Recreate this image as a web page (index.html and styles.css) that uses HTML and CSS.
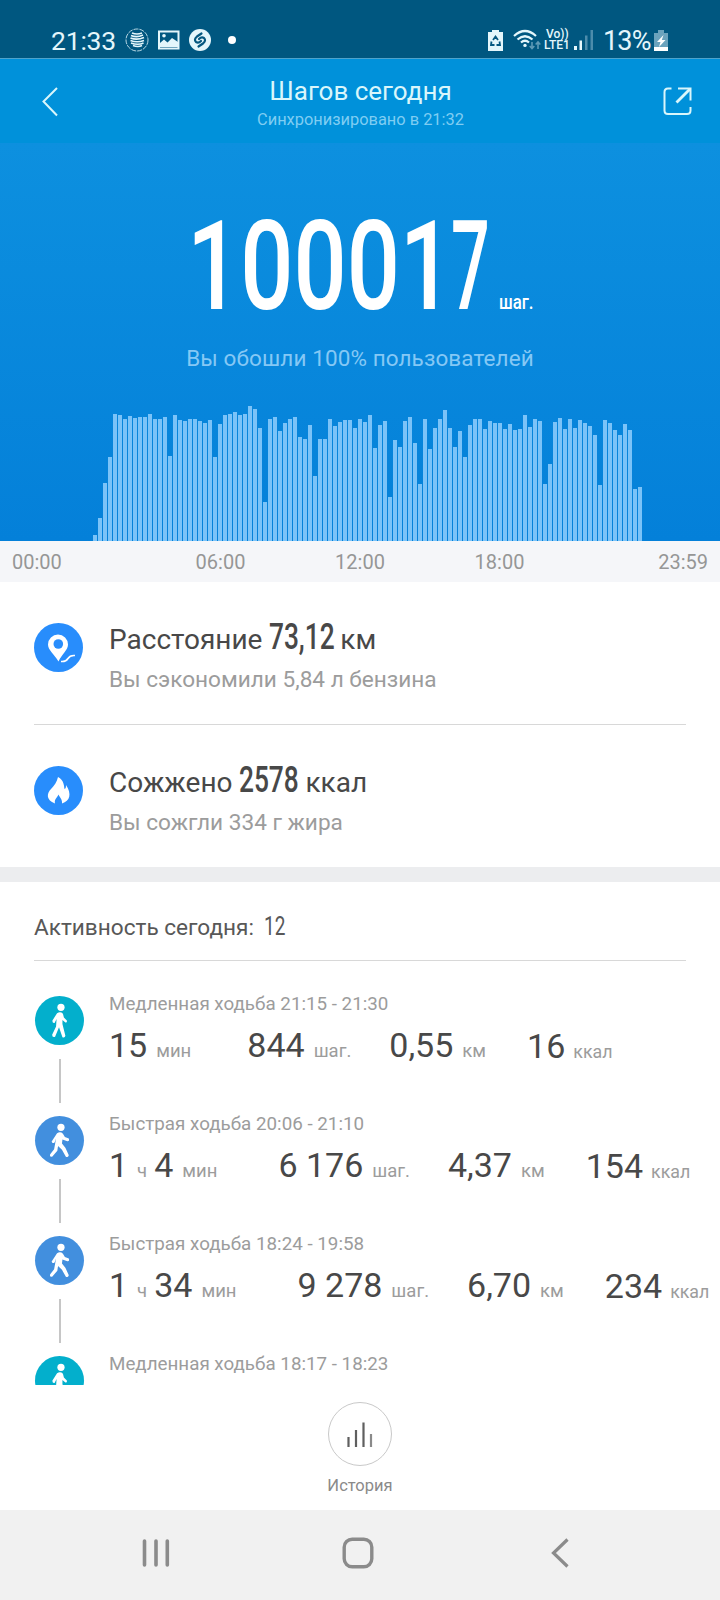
FILE: index.html
```html
<!DOCTYPE html>
<html lang="ru">
<head>
    <meta charset="UTF-8">
    <meta name="viewport" content="width=device-width, initial-scale=1.0">
    <title>Шагов сегодня</title>
    <link rel="stylesheet" href="styles.css">
</head>
<body>
    <!-- Shared icons -->
    <svg class="defs" width="0" height="0">
        <symbol id="walk-slow" viewBox="0 0 50 50">
            <circle cx="26.5" cy="11.5" r="3.7" fill="#fff"/>
            <path d="M22.5 17.5 Q26 15.5 28.5 18 L29.5 22 L32.5 25 Q33 27.5 31 27 L28 24.5 L28 28.5 L31 40.5 Q30.5 43 28 42 L24.5 32 L20.5 41.5 Q17.5 42.5 17.5 39.5 L21.5 31 L22 23.5 L20 27.5 Q17.5 28 17.8 25 Z" fill="#fff"/>
        </symbol>
        <symbol id="walk-fast" viewBox="0 0 50 50">
            <circle cx="26.5" cy="11.5" r="3.7" fill="#fff"/>
            <path d="M22.5 17.5 Q26 15.5 28.5 18 L30.5 21.5 L34.5 23 Q35.5 26 33 25.8 L28 24 L27.5 28 L31 32.5 L34.5 40 Q33.5 42.8 31.5 41.5 L27.5 34.5 L23.5 30.5 L22.8 35.5 L17.5 41.5 Q14.5 42 15.5 39 L19.5 34 L21.5 23 L20 27 Q17.5 28.5 17 26 Z" fill="#fff"/>
        </symbol>
    </svg>

    <div class="status-bar">
        <span class="clock">21:33</span>
        <svg class="icon-globe" width="24" height="24" viewBox="0 0 24 24" fill="none" stroke="#e4f6fb">
            <circle cx="12" cy="12" r="11" stroke-width="0.8" stroke-dasharray="5 1"/>
            <path d="M7 5 Q12 7 17 5 M6 7.5 Q12 10 18 7 M5.5 10 Q12 12.5 19 9.5 M5.5 12.5 Q12 15 19 12.5 M6 15 Q13 17.5 18.5 15 M8 17.5 Q13 19.5 17 17.5" stroke-width="1.6"/>
        </svg>
        <svg class="icon-picture" width="22" height="20" viewBox="0 0 22 20">
            <path d="M1 1.5H20.5V18.5H1Z" fill="none" stroke="#e4f6fb" stroke-width="2"/>
            <path d="M2 17V13L6 9.5L9.5 12.5L14 8L20 12V17Z" fill="#e4f6fb"/>
            <circle cx="6" cy="5.8" r="1.8" fill="#e4f6fb"/>
        </svg>
        <svg class="icon-shazam" width="22" height="22" viewBox="0 0 22 22">
            <circle cx="11" cy="11" r="11" fill="#e4f6fb"/>
            <path d="M12.5 4.5L8 7.5Q4.5 10.5 7 13Q9.5 14.5 12 12 M9.5 17.5L14 14.5Q17.5 11.5 15 9Q12.5 7.5 10 10" fill="none" stroke="#05577f" stroke-width="2.2" stroke-linecap="round"/>
        </svg>
        <span class="status-dot"></span>

        <div class="status-right">
            <svg class="icon-saver" width="15" height="21" viewBox="0 0 15 21">
                <path d="M4 0H11V2H15V21H0V2H4Z" fill="#e4f6fb"/>
                <path d="M5 10L7.5 6.5L10 10 M11.5 11.5L12 15H8.5 M3.5 11.5L3 15H6.5" fill="none" stroke="#05577f" stroke-width="1.8"/>
            </svg>
            <svg class="icon-wifi" width="29" height="22" viewBox="0 0 29 22" fill="none" stroke="#e4f6fb" stroke-width="2.2">
                <path d="M1 7Q12 -3 23 7 M4.5 10.5Q12 4 19.5 10.5 M8 13.5Q12 10 16 13.5"/>
                <circle cx="12" cy="16.4" r="1.7" fill="#e4f6fb" stroke="none"/>
                <path d="M19 13V19 M16.7 17L19 19.5L21.3 17 M25 20V14 M22.7 15.5L25 13L27.3 15.5" stroke="#5e9ab6" stroke-width="1.6"/>
            </svg>
            <div class="volte"><span>Vo))</span><span>LTE1</span></div>
            <svg class="icon-signal" width="20" height="20" viewBox="0 0 20 20">
                <path d="M0 16H3V20H0Z M5.5 10.5H8V20H5.5Z" fill="#e4f6fb"/>
                <path d="M11 5.5H13.5V20H11Z M16.5 0H19V20H16.5Z" fill="#4c8cab"/>
            </svg>
            <span class="battery-text">13%</span>
            <svg class="icon-battery" width="15" height="21" viewBox="0 0 15 21">
                <path d="M4 0H10V3H14V17H0V3H4Z" fill="#6ba3bd"/>
                <path d="M0 17H14V21H0Z M9.5 5L3 12H6.5L5 17L11.5 10H7.8Z" fill="#fff"/>
            </svg>
        </div>
    </div>

    <header class="header">
        <svg class="back" width="16" height="30" viewBox="0 0 16 30" fill="none" stroke="#d9f6fb" stroke-width="2">
            <path d="M15 1L1.5 14.5L15 28.5"/>
        </svg>
        <div class="header-title">
            <h1>Шагов сегодня</h1>
            <p>Синхронизировано в 21:32</p>
        </div>
        <svg class="share" width="29" height="29" viewBox="0 0 29 29" fill="none" stroke="#d9f6fb" stroke-width="2">
            <path d="M8.5 1.5H5Q1.5 1.5 1.5 5V23.5Q1.5 27 5 27H24Q27.5 27 27.5 23.5V20 M15 1.5H27.5V13.5"/>
            <path d="M27 2L13.5 15.5" stroke-width="2.8"/>
        </svg>
    </header>

    <section class="hero">
        <div class="steps">
            <span class="steps-value"><span class="narrow">10001</span><span class="narrow seven">7</span></span>
            <span class="steps-unit"><span class="narrow">шаг.</span></span>
        </div>
        <p class="rank">Вы обошли 100% пользователей</p>
        <div class="chart" id="chart"></div>
    </section>
    <div class="axis">
        <span>00:00</span>
        <span>06:00</span>
        <span>12:00</span>
        <span>18:00</span>
        <span>23:59</span>
    </div>

    <section class="summary">
        <div class="summary-row">
            <svg class="summary-icon" width="49" height="49" viewBox="0 0 49 49">
                <circle cx="24.5" cy="24.5" r="24.5" fill="#288dfc"/>
                <path d="M24.5 38.5C20 31 14 27 14 21.5A10 10 0 0 1 34 21.5C34 27 28 31 24.5 38.5Z" fill="#fff"/>
                <circle cx="24.3" cy="21" r="4.8" fill="#288dfc"/>
                <path d="M27 38.5Q32 39 34 35.5Q36 32 41 32.5" fill="none" stroke="#fff" stroke-width="1.6"/>
            </svg>
            <div>
                <p class="summary-main">Расстояние <span class="num num-km"><span class="narrow">73,12</span></span> км</p>
                <p class="summary-sub">Вы сэкономили 5,84 л бензина</p>
            </div>
        </div>
        <div class="summary-row">
            <svg class="summary-icon" width="49" height="49" viewBox="0 0 49 49">
                <circle cx="24.5" cy="24.5" r="24.5" fill="#288dfc"/>
                <path d="M24 11C30 14 30 20 30.5 23C32 22.5 32 20.5 32 19C38 28 36 35 28 37.5C28.5 33.5 26 32 24.5 28.5C23.5 31.5 20 33 21 37.5C12 34 12.5 27.5 17 23C20 20 23 16 24 11Z" fill="#fff"/>
            </svg>
            <div>
                <p class="summary-main">Сожжено <span class="num num-kcal"><span class="narrow">2578</span></span> ккал</p>
                <p class="summary-sub">Вы сожгли 334 г жира</p>
            </div>
        </div>
    </section>

    <section class="activity">
        <h2>Активность сегодня: <span class="num num-count"><span class="narrow">12</span></span></h2>
        <div class="activity-list">
            <div class="item">
                <div class="item-track">
                    <svg class="item-icon slow" width="49" height="49"><use href="#walk-slow"/></svg>
                    <span class="item-line"></span>
                </div>
                <div class="item-body">
                    <p class="item-title">Медленная ходьба 21:15 - 21:30</p>
                    <div class="item-stats">
                        <span class="time"><b>15</b><i>мин</i></span>
                        <span class="count"><b>844</b><i>шаг.</i></span>
                        <span class="dist"><b>0,55</b><i>км</i></span>
                        <span class="kcal"><b>16</b><i>ккал</i></span>
                    </div>
                </div>
            </div>
            <div class="item">
                <div class="item-track">
                    <svg class="item-icon fast" width="49" height="49"><use href="#walk-fast"/></svg>
                    <span class="item-line"></span>
                </div>
                <div class="item-body">
                    <p class="item-title">Быстрая ходьба 20:06 - 21:10</p>
                    <div class="item-stats">
                        <span class="time time-long"><b>1</b><i class="hour">ч</i><b>4</b><i>мин</i></span>
                        <span class="count"><b>6 176</b><i>шаг.</i></span>
                        <span class="dist"><b>4,37</b><i>км</i></span>
                        <span class="kcal"><b>154</b><i>ккал</i></span>
                    </div>
                </div>
            </div>
            <div class="item">
                <div class="item-track">
                    <svg class="item-icon fast" width="49" height="49"><use href="#walk-fast"/></svg>
                    <span class="item-line"></span>
                </div>
                <div class="item-body">
                    <p class="item-title">Быстрая ходьба 18:24 - 19:58</p>
                    <div class="item-stats">
                        <span class="time time-long"><b>1</b><i class="hour">ч</i><b>34</b><i>мин</i></span>
                        <span class="count"><b>9 278</b><i>шаг.</i></span>
                        <span class="dist"><b>6,70</b><i>км</i></span>
                        <span class="kcal"><b>234</b><i>ккал</i></span>
                    </div>
                </div>
            </div>
            <div class="item">
                <div class="item-track">
                    <svg class="item-icon slow" width="49" height="49"><use href="#walk-slow"/></svg>
                </div>
                <div class="item-body">
                    <p class="item-title">Медленная ходьба 18:17 - 18:23</p>
                </div>
            </div>
        </div>
    </section>

    <footer class="history">
        <div class="history-btn">
            <svg width="26" height="25" viewBox="0 0 26 25" fill="none" stroke="#5f5f5f" stroke-width="2.2">
                <path d="M1.5 15V25 M9 8V25 M16.5 0.5V25"/>
                <path d="M24 12V25" stroke="#8a8a8a"/>
            </svg>
        </div>
        <span>История</span>
    </footer>

    <nav class="nav-bar">
        <svg width="28" height="30" viewBox="0 0 28 30" stroke="#8b8b8b" stroke-width="3.6" stroke-linecap="round">
            <path d="M2.5 3V27 M14 3V27 M25.3 3V27"/>
        </svg>
        <svg class="home" width="32" height="32" viewBox="0 0 32 32" fill="none" stroke="#8b8b8b" stroke-width="3.4">
            <rect x="2.2" y="2.2" width="27.6" height="27.6" rx="8"/>
        </svg>
        <svg width="18" height="30" viewBox="0 0 18 30" fill="none" stroke="#8b8b8b" stroke-width="3.2">
            <path d="M16.5 1.5L2.5 15L16.5 28.5"/>
        </svg>
    </nav>

    <script>
        // bar heights in px
        var steps = [
            6, 23, 58, 84, 127, 126, 122, 125, 123, 124, 124, 127, 122, 122, 124, 85, 126, 121, 120, 122,
            122, 120, 118, 121, 84, 117, 126, 127, 129, 126, 127, 135, 132, 113, 39, 122, 124, 110, 118, 122,
            124, 104, 102, 116, 65, 102, 102, 122, 115, 119, 121, 121, 113, 122, 119, 126, 93, 116, 120, 44,
            101, 94, 120, 124, 98, 57, 122, 92, 113, 122, 131, 113, 94, 110, 84, 116, 122, 122, 112, 120,
            118, 118, 112, 117, 111, 112, 126, 114, 122, 120, 57, 77, 119, 123, 112, 122, 113, 121, 118, 115,
            106, 56, 121, 118, 111, 106, 117, 111, 52, 54
        ];
        var chart = document.getElementById('chart');
        steps.forEach(function(h) {
            var bar = document.createElement('span');
            bar.className = 'bar';
            bar.style.height = h + 'px';
            chart.appendChild(bar);
        });
    </script>
</body>
</html>
```
FILE: styles.css
```css
* {
    box-sizing: border-box;
}
body {
    margin: 0;
    width: 720px;
    height: 1600px;
    overflow: hidden;
    display: flex;
    flex-direction: column;
    background-color: #fff;
    font-family: Roboto, "Liberation Sans", sans-serif;
    color: #484848;
}
h1, h2, p {
    margin: 0;
    font-weight: 400;
}
svg {
    display: block;
    flex: none;
}
.defs {
    position: absolute;
}
.narrow {
    display: inline-block;
    transform-origin: left bottom;
}

/* Status bar */
.status-bar {
    height: 59px;
    flex: none;
    display: flex;
    align-items: center;
    padding: 22px 51px 0 51px;
    background-color: #005780;
    border-bottom: 1px solid #4fa3cb;
    color: #e4f6fb;
}
.clock {
    width: 74px;
    font-size: 26.5px;
    letter-spacing: -0.2px;
}
.icon-picture {
    margin-left: 9px;
}
.icon-shazam {
    margin-left: 9px;
}
.status-dot {
    width: 8px;
    height: 8px;
    margin-left: 17px;
    border-radius: 50%;
    background-color: #fff;
}
.status-right {
    display: flex;
    align-items: center;
    margin-left: auto;
}
.icon-wifi {
    margin-left: 10px;
}
.volte {
    display: flex;
    flex-direction: column;
    width: 28px;
    margin-left: 2px;
    font-size: 12px;
    font-weight: 500;
    line-height: 11px;
}
.volte span:first-child {
    padding-left: 2px;
}
.icon-signal {
    margin-left: 2px;
}
.battery-text {
    width: 51px;
    margin-left: 9px;
    padding-top: 1px;
    font-size: 27px;
    letter-spacing: -0.8px;
}

/* Header */
.header {
    height: 84px;
    flex: none;
    display: flex;
    justify-content: space-between;
    align-items: flex-start;
    padding: 28px 28px 0 42px;
    background-color: #0091da;
}
.header-title {
    margin-top: -12px;
    text-align: center;
    color: #d9f6fb;
}
.header-title h1 {
    font-size: 26px;
    line-height: 32px;
}
.header-title p {
    margin-top: 3px;
    font-size: 16.4px;
    line-height: 20px;
    color: #7fcdf2;
}

/* Steps and chart */
.hero {
    height: 398px;
    flex: none;
    display: flex;
    flex-direction: column;
    background: linear-gradient(#0d90df, #0480d9);
}
.steps {
    display: flex;
    align-items: baseline;
    height: 195px;
    padding: 51px 0 0 187px;
    color: #fff;
}
.steps-value {
    display: flex;
    width: 312px;
    font-size: 124px;
    font-weight: 500;
    line-height: 146px;
}
.steps-value .narrow {
    width: 264px;
    transform: scaleX(0.755);
}
.steps-value .seven {
    width: 40px;
    transform: scaleX(0.55);
}
.steps-unit {
    font-size: 21px;
    font-weight: 500;
}
.steps-unit .narrow {
    transform: scaleX(0.8);
}
.rank {
    text-align: center;
    font-size: 22.5px;
    line-height: 40px;
    letter-spacing: 0.1px;
    color: #85c8f5;
}
.chart {
    flex: 1;
    display: flex;
    align-items: flex-end;
    gap: 1px;
    padding-left: 93px;
}
.bar {
    width: 4px;
    background-color: #7bc3f8;
}
.axis {
    height: 41px;
    flex: none;
    display: grid;
    grid-template-columns: 151px 139px 140px 139px 1fr;
    align-items: center;
    justify-items: center;
    background-color: #f5f6f9;
    font-size: 20px;
    color: #969696;
}
.axis span:first-child {
    justify-self: start;
    padding-left: 12px;
}
.axis span:last-child {
    justify-self: end;
    padding-right: 12px;
}

/* Distance and calories */
.summary {
    flex: none;
    height: 300px;
    padding: 0 34px;
    border-bottom: 15px solid #ecedef;
}
.summary-row {
    display: flex;
    height: 143px;
    padding-top: 41px;
}
.summary-row:first-child {
    border-bottom: 1px solid #d8d8d8;
}
.summary-icon {
    margin-right: 26px;
}
.summary-main {
    margin-top: -3px;
    font-size: 28px;
    line-height: 34px;
}
.summary-sub {
    margin-top: 6px;
    font-size: 22.6px;
    line-height: 34px;
    color: #9c9c9c;
}
.num {
    display: inline-block;
    white-space: nowrap;
}
.num-km, .num-kcal {
    font-size: 36px;
    font-weight: 500;
    line-height: 34px;
}
.num-km {
    width: 64px;
}
.num-kcal {
    width: 59px;
}
.num-km .narrow, .num-kcal .narrow {
    transform: scaleX(0.73);
}

/* Activity */
.activity {
    flex: none;
    height: 503px;
    overflow: hidden;
    padding-left: 34px;
}
.activity h2 {
    width: 652px;
    height: 79px;
    padding-top: 28px;
    border-bottom: 1px solid #d8d8d8;
    font-size: 22.6px;
    line-height: 34px;
    color: #585858;
}
.num-count {
    margin-left: 4px;
    font-size: 25px;
}
.num-count .narrow {
    transform: scaleX(0.76);
}
.activity-list {
    padding-top: 29px;
}
.item {
    display: flex;
    height: 120px;
}
.item-track {
    flex: none;
    width: 51px;
    margin-right: 24px;
    display: flex;
    flex-direction: column;
    align-items: center;
    padding-top: 6px;
}
.item-icon {
    border-radius: 50%;
}
.item-icon.slow {
    background-color: #03afcc;
}
.item-icon.fast {
    background-color: #428fde;
}
.item-line {
    width: 2px;
    height: 44px;
    margin-top: 14px;
    background-color: #c6c6c6;
}
.item-title {
    font-size: 18.8px;
    line-height: 28px;
    color: #9c9c9c;
    white-space: nowrap;
}
.item-stats {
    display: flex;
    align-items: baseline;
    margin-top: 6px;
    line-height: 42px;
    white-space: nowrap;
}
.item-stats b {
    font-size: 34px;
    font-weight: 400;
}
.item-stats i {
    margin: 0 9px;
    font-size: 18.5px;
    font-style: normal;
    color: #9c9c9c;
}
.item-stats .hour {
    margin-right: 7px;
}
.item-stats .kcal i {
    margin: 0 0 0 8px;
    font-size: 17.8px;
}
.time {
    margin-right: 47px;
}
.time-long {
    margin-right: 52px;
}
.count {
    margin-right: 29px;
}
.dist {
    margin-right: 32px;
}
.kcal {
    position: relative;
    top: 1px;
}

/* Bottom */
.history {
    flex: none;
    height: 125px;
    display: flex;
    flex-direction: column;
    align-items: center;
    padding-top: 17px;
    font-size: 16.5px;
    color: #8a8a8a;
}
.history-btn {
    width: 64px;
    height: 64px;
    margin-bottom: 10px;
    display: flex;
    justify-content: center;
    align-items: center;
    border: 1px solid #c9c9c9;
    border-radius: 50%;
}
.nav-bar {
    flex: none;
    height: 90px;
    display: flex;
    justify-content: space-between;
    align-items: center;
    padding: 0 151px 4px 142px;
    background-color: #f1f1f1;
}
.home {
    margin-right: 6px;
}
```
